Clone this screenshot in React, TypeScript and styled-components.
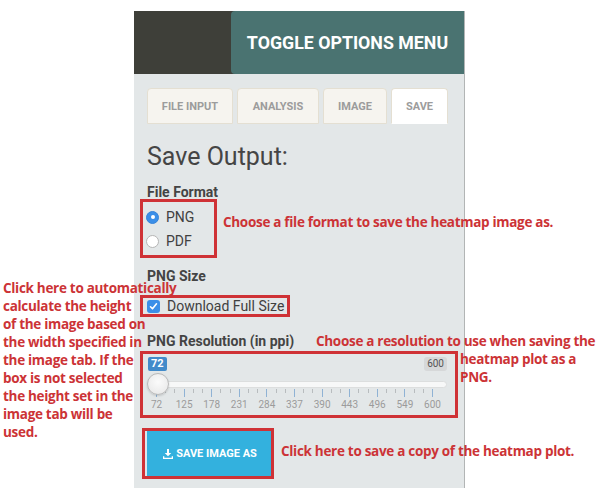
import React from "react";
import styled, { createGlobalStyle } from "styled-components";

const GlobalStyle = createGlobalStyle`
  html, body { margin: 0; padding: 0; background: #ffffff; }
  body { font-family: Roboto, "Liberation Sans", sans-serif; }
  * { box-sizing: border-box; }
`;

const ANN_FONT = `"Open Sans", "Liberation Sans", sans-serif`;
const RED = "#cf3236";

const Page = styled.div`
  position: relative;
  width: 600px;
  height: 500px;
  padding: 11px 0 0 134px;
`;

const Panel = styled.div`
  width: 331px;
  height: 477px;
  background: #e3e7e8;
  border-right: 1px solid #b2b5b5;
  display: flex;
  flex-direction: column;
`;

const Header = styled.div`
  height: 63px;
  background: #3e3f39;
  display: flex;
  padding-left: 97px;
`;

const ToggleButton = styled.div`
  flex: 1;
  background: #4a7371;
  border-radius: 4px 0 0 4px;
  display: flex;
  align-items: center;
  justify-content: center;
  color: #ffffff;
  font: 700 17.8px Roboto, sans-serif;
`;

const Body = styled.div`
  padding: 14px 0 0 13px;
  display: flex;
  flex-direction: column;
  align-items: flex-start;
`;

const Tabs = styled.div`
  display: flex;
  gap: 4px;
`;

const Tab = styled.div<{ $w: number; $active?: boolean }>`
  width: ${(p) => p.$w}px;
  height: 36px;
  background: ${(p) => (p.$active ? "#ffffff" : "#f6f4ef")};
  border: 1px solid #e4dfd2;
  border-bottom-color: ${(p) => (p.$active ? "#ffffff" : "#e4dfd2")};
  border-radius: 4px 4px 0 0;
  display: flex;
  align-items: center;
  justify-content: center;
  font: 700 11px Roboto, sans-serif;
  color: #9c9c9c;
`;

const Heading = styled.h2`
  margin: 18px 0 0;
  font: 400 25px/30px Roboto, sans-serif;
  color: #454545;
`;

const Label = styled.div<{ $mt: number }>`
  margin-top: ${(p) => p.$mt}px;
  font: 700 14px/20px Roboto, sans-serif;
  color: #444444;
`;

const Highlight = styled.div<{ $mt: number; $ml: number; $w: number; $h: number }>`
  margin-top: ${(p) => p.$mt}px;
  margin-left: ${(p) => p.$ml}px;
  width: ${(p) => p.$w}px;
  height: ${(p) => p.$h}px;
  border: 3px solid ${RED};
  display: flex;
  flex-direction: column;
`;

const RadioList = styled.div`
  padding: 3px 0 0 3px;
  display: flex;
  flex-direction: column;
`;

const RadioRow = styled.div`
  height: 24px;
  display: flex;
  align-items: center;
  gap: 7px;
  font: 400 14px Roboto, sans-serif;
  color: #404040;
`;

const RadioDot = styled.span<{ $on?: boolean }>`
  width: 13px;
  height: 13px;
  border-radius: 50%;
  flex: none;
  display: flex;
  align-items: center;
  justify-content: center;
  background: ${(p) => (p.$on ? "#3b8fe8" : "#ffffff")};
  border: 1px solid ${(p) => (p.$on ? "#3784d8" : "#b5b5b5")};
  &::after {
    content: "";
    width: 4px;
    height: 4px;
    border-radius: 50%;
    background: #ffffff;
    display: ${(p) => (p.$on ? "block" : "none")};
  }
`;

const CheckRow = styled.div`
  height: 16px;
  padding-left: 4px;
  display: flex;
  align-items: center;
  gap: 7px;
  font: 400 14px Roboto, sans-serif;
  color: #404040;
`;

const CheckBox = styled.span`
  width: 13px;
  height: 13px;
  border-radius: 3px;
  background: #3b8fe8;
  display: flex;
  align-items: center;
  justify-content: center;
  flex: none;
`;

const SliderBox = styled.div`
  position: relative;
  height: 61px;
`;

const ValueBadge = styled.span`
  position: absolute;
  left: 5px;
  top: 3px;
  height: 14px;
  padding: 0 3px;
  border-radius: 2px;
  background: #428bca;
  color: #ffffff;
  font: 700 11px/14px Roboto, sans-serif;
`;

const MaxBadge = styled.span`
  position: absolute;
  right: 8px;
  top: 3px;
  height: 14px;
  padding: 0 3px;
  border-radius: 3px;
  background: #d6d8d9;
  color: #555555;
  font: 400 10px/14px Roboto, sans-serif;
`;

const Track = styled.div`
  position: absolute;
  left: 7px;
  right: 8px;
  top: 27px;
  height: 7px;
  border-radius: 4px;
  background: #f7f8f8;
  border: 1px solid #dcdede;
`;

const Handle = styled.div`
  position: absolute;
  left: 4px;
  top: 19px;
  width: 22px;
  height: 22px;
  border-radius: 50%;
  background: radial-gradient(circle at 50% 40%, #fbfbfb 0%, #ececec 70%, #dedede 100%);
  border: 1px solid #b9b9b9;
  box-shadow: 0 1px 2px rgba(0, 0, 0, 0.15);
  z-index: 2;
`;

const Tick = styled.span<{ $major?: boolean }>`
  position: absolute;
  top: 35px;
  width: 1px;
  height: ${(p) => (p.$major ? 8 : 4)}px;
  background: ${(p) => (p.$major ? "#8fb2d4" : "#b8bcbe")};
`;

const TickLabel = styled.span`
  position: absolute;
  top: 45px;
  transform: translateX(-50%);
  font: 400 10px/12px Roboto, sans-serif;
  color: #9b9b9b;
`;

const SaveButton = styled.div`
  flex: 1;
  background: #33b1de;
  border-left: 2px solid #dbe8ee;
  display: flex;
  align-items: center;
  justify-content: center;
  gap: 3px;
  color: #ffffff;
  font: 700 11px Roboto, sans-serif;
  padding-left: 2px;
`;

const Note = styled.div<{ $x: number; $y: number }>`
  position: absolute;
  left: ${(p) => p.$x}px;
  top: ${(p) => p.$y}px;
  font: 700 13.5px/18px ${ANN_FONT};
  letter-spacing: -0.3px;
  color: #cc3336;
  white-space: nowrap;
`;

const NoteLine = styled.div<{ $indent?: number }>`
  padding-left: ${(p) => p.$indent ?? 0}px;
`;

const TICK_START = 13;
const TICK_SPAN = 276;
const LABELS = [72, 125, 178, 231, 284, 337, 390, 443, 496, 549, 600];

function Slider() {
  const ticks: React.ReactNode[] = [];
  const step = TICK_SPAN / 10;
  for (let i = 0; i <= 10; i++) {
    const x = TICK_START + step * i;
    ticks.push(<Tick key={`M${i}`} $major style={{ left: x }} />);
    if (i < 10) {
      ticks.push(<Tick key={`a${i}`} style={{ left: x + step / 3 }} />);
      ticks.push(<Tick key={`b${i}`} style={{ left: x + (2 * step) / 3 }} />);
    }
  }
  return (
    <SliderBox>
      <ValueBadge>72</ValueBadge>
      <MaxBadge>600</MaxBadge>
      <Track />
      {ticks}
      {LABELS.map((v, i) => (
        <TickLabel key={v} style={{ left: TICK_START + step * i + 0.5 }}>
          {v}
        </TickLabel>
      ))}
      <Handle />
    </SliderBox>
  );
}

const DownloadIcon = () => (
  <svg width="10" height="10" viewBox="0 0 10 10" fill="#ffffff">
    <path d="M4 0h2v4h2.3L5 7.2 1.7 4H4z" />
    <path d="M0 7.2h1.3v1.5h7.4V7.2H10V10H0z" />
  </svg>
);

export default function App() {
  return (
    <>
      <GlobalStyle />
      <Page>
        <Panel>
          <Header>
            <ToggleButton>TOGGLE OPTIONS MENU</ToggleButton>
          </Header>
          <Body>
            <Tabs>
              <Tab $w={86}>FILE INPUT</Tab>
              <Tab $w={82}>ANALYSIS</Tab>
              <Tab $w={64}>IMAGE</Tab>
              <Tab $w={57} $active>
                SAVE
              </Tab>
            </Tabs>
            <Heading>Save Output:</Heading>
            <Label $mt={10}>File Format</Label>
            <Highlight $mt={-3} $ml={-7} $w={77} $h={59}>
              <RadioList>
                <RadioRow>
                  <RadioDot $on />
                  PNG
                </RadioRow>
                <RadioRow>
                  <RadioDot />
                  PDF
                </RadioRow>
              </RadioList>
            </Highlight>
            <Label $mt={8}>PNG Size</Label>
            <Highlight $mt={9} $ml={-7} $w={150} $h={22}>
              <CheckRow>
                <CheckBox>
                  <svg width="9" height="9" viewBox="0 0 9 9">
                    <path d="M1.5 4.8l2 2 4-5" fill="none" stroke="#fff" strokeWidth="1.6" strokeLinecap="round" strokeLinejoin="round" />
                  </svg>
                </CheckBox>
                Download Full Size
              </CheckRow>
            </Highlight>
            <Label $mt={14}>PNG Resolution (in ppi)</Label>
            <Highlight $mt={0} $ml={-7} $w={318} $h={67}>
              <Slider />
            </Highlight>
            <Highlight $mt={10} $ml={-5} $w={132} $h={51}>
              <SaveButton>
                <DownloadIcon />
                SAVE IMAGE AS
              </SaveButton>
            </Highlight>
          </Body>
        </Panel>

        <Note $x={223} $y={213}>Choose a file format to save the heatmap image as.</Note>
        <Note $x={316} $y={332}>
          <NoteLine>Choose a resolution to use when saving the</NoteLine>
          <NoteLine $indent={144}>heatmap plot as a</NoteLine>
          <NoteLine $indent={144}>PNG.</NoteLine>
        </Note>
        <Note $x={281} $y={442}>Click here to save a copy of the heatmap plot.</Note>
        <Note $x={3} $y={279}>
          <NoteLine>Click here to automatically</NoteLine>
          <NoteLine>calculate the height</NoteLine>
          <NoteLine>of the image based on</NoteLine>
          <NoteLine>the width specified in</NoteLine>
          <NoteLine>the image tab. If the</NoteLine>
          <NoteLine>box is not selected</NoteLine>
          <NoteLine>the height set in the</NoteLine>
          <NoteLine>image tab will be</NoteLine>
          <NoteLine>used.</NoteLine>
        </Note>
      </Page>
    </>
  );
}
